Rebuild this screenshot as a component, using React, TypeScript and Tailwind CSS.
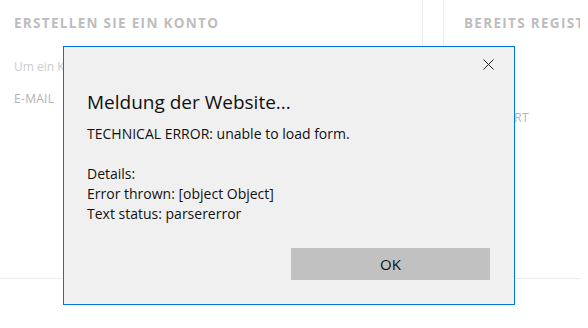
import React from 'react';

const dialogFont = { fontFamily: '"Open Sans", "Noto Sans", sans-serif' };

function CloseIcon() {
  return (
    <svg width="11" height="11" viewBox="0 0 11 11" fill="none">
      <path d="M0.5 0.5L10.5 10.5M10.5 0.5L0.5 10.5" stroke="#222" strokeWidth="1" />
    </svg>
  );
}

function AlertDialog() {
  return (
    <div
      className="absolute left-[63px] top-[46px] w-[452px] h-[259px] bg-[#f0f0f0] border border-[#0078d7] flex flex-col"
      style={dialogFont}
    >
      <div className="flex justify-end pt-[10px] pr-[19px]">
        <button className="w-[14px] h-[14px] flex items-center justify-center">
          <CloseIcon />
        </button>
      </div>
      <div className="pl-[23px] pr-6 pt-[18px] text-[#111]">
        <h1 className="text-[19px] leading-[26px] font-normal">Meldung der Website...</h1>
        <p className="mt-[9px] text-[14px] leading-[20px]">TECHNICAL ERROR: unable to load form.</p>
        <p className="mt-[20px] text-[14px] leading-[20px]">Details:</p>
        <p className="text-[14px] leading-[20px]">Error thrown: [object Object]</p>
        <p className="text-[14px] leading-[20px]">Text status: parsererror</p>
      </div>
      <div className="mt-auto flex justify-end pr-6 pb-6">
        <button className="w-[199px] h-[32px] bg-[#c1c1c1] text-[15px] text-[#111]">OK</button>
      </div>
    </div>
  );
}

export default function App() {
  return (
    <div
      className="relative w-[588px] h-[328px] bg-white overflow-hidden"
      style={{ fontFamily: '"Open Sans", "Noto Sans", sans-serif' }}
    >
      <div className="flex h-[279px] w-[580px] border-b border-[#ececec]">
        <section className="w-[423px] shrink-0 overflow-hidden border-r border-[#ececec] pl-[14px] pt-[14px]">
          <h2 className="text-[13.5px] leading-[18px] font-bold tracking-[1.3px] text-[#bdbdbd] uppercase">
            Erstellen Sie ein Konto
          </h2>
          <p className="mt-[26px] text-[12px] text-[#cccccc] whitespace-nowrap">
            Um ein Konto zu erstellen, geben Sie bitte Ihre E-Mail-Adresse ein.
          </p>
          <p className="mt-[14px] text-[12px] tracking-[0.3px] text-[#b3b3b3]">E-MAIL</p>
        </section>
        <div className="w-[20px] shrink-0" />
        <section className="flex-1 min-w-0 overflow-hidden border-l border-[#ececec] pl-[20px] pt-[14px]">
          <h2 className="text-[13.5px] leading-[18px] font-bold tracking-[1.3px] text-[#bdbdbd] uppercase whitespace-nowrap">
            Bereits registriert?
          </h2>
          <p className="mt-[77px] text-[12px] tracking-[0.3px] text-[#b3b3b3]">PASSWORT</p>
        </section>
      </div>
      <AlertDialog />
    </div>
  );
}
